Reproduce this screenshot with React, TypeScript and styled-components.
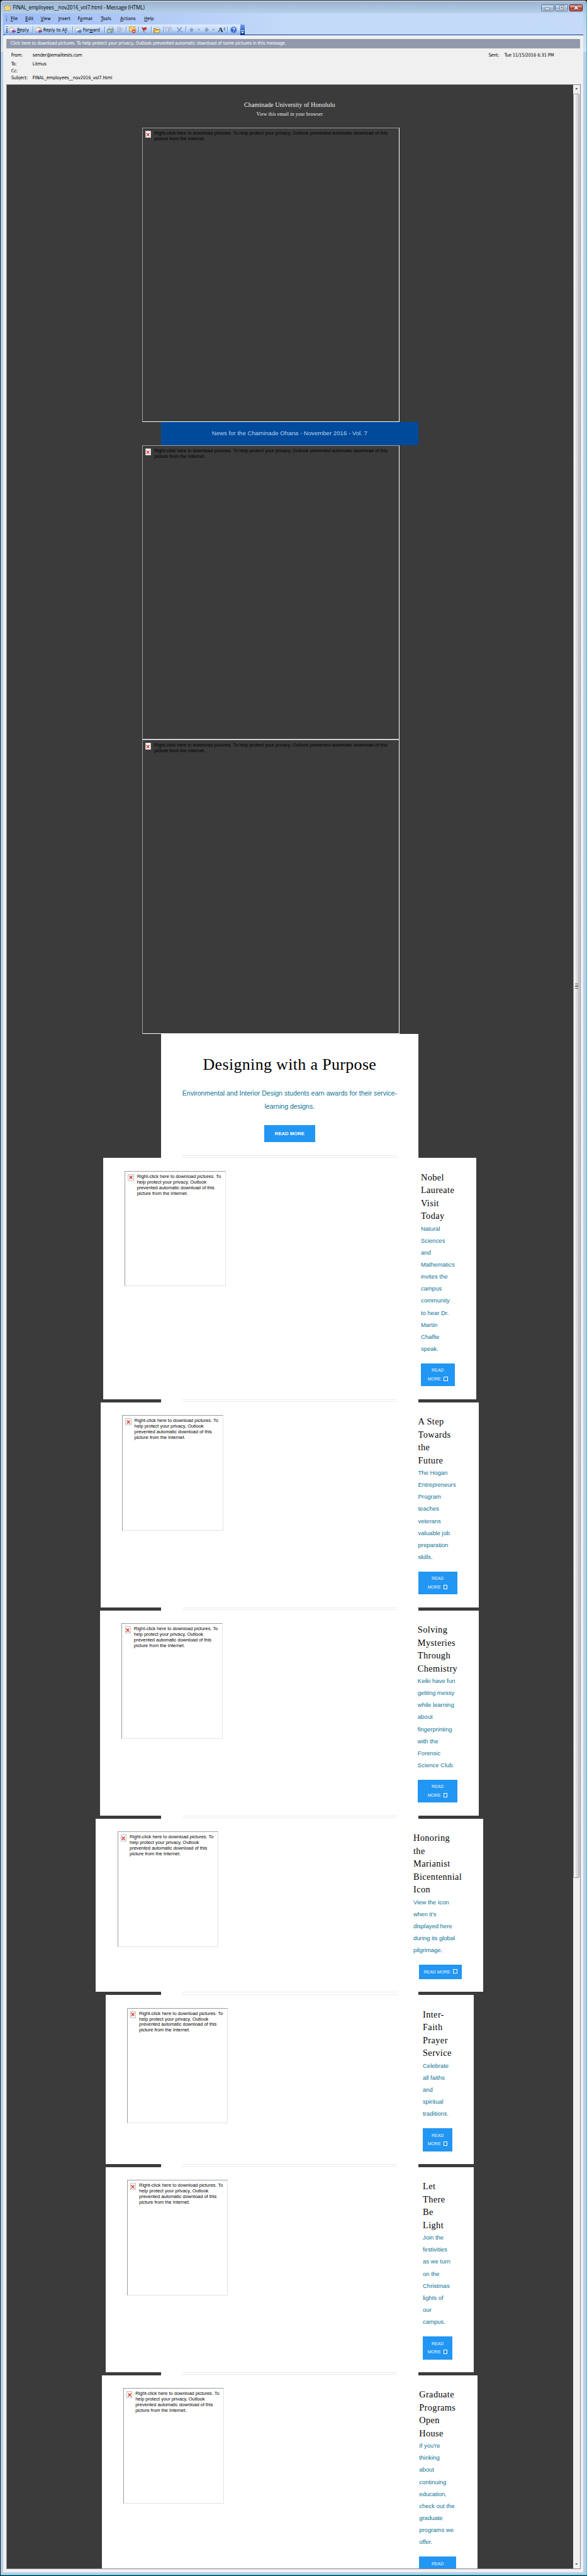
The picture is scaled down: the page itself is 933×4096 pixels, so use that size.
import React from "react";
import styled, { createGlobalStyle, css } from "styled-components";

/* 1rem equals ten layout units; every size below is written in rem. */
const GlobalStyle = createGlobalStyle`
  html { font-size: 6.8267px; }
  body { margin: 0; background: #111; overflow: hidden; }
  *, *::before, *::after { box-sizing: border-box; }
`;

const uiFont = `"DejaVu Sans Condensed", "DejaVu Sans", sans-serif`;
const bodyFont = `"Liberation Sans", Arial, sans-serif`;
const serifFont = `"Liberation Serif", Georgia, serif`;

const Window = styled.div`
  display: flex;
  flex-direction: column;
  width: 100%;
  height: 600rem;
  overflow: hidden;
  padding: 0.1rem 0 0.1rem 0.1rem;
  background: #14181c;
  font-family: ${uiFont};
  font-stretch: condensed;
  color: #000;
`;

const Frame = styled.div`
  flex: 1;
  min-height: 0;
  display: flex;
  flex-direction: column;
  padding: 0 0.7rem 0.6rem;
  border-top: 1px solid #f4f8fc;
  border-right: 1px solid #35c6dd;
  border-bottom: 1px solid #18c3dc;
  border-radius: 0.6rem 0.6rem 0 0;
  background: linear-gradient(#9ab3d1 0, #b6d0e9 2.8rem, #d3e3f5 11.7rem, #b7d0ea 11.8rem);
`;

const TitleBar = styled.div`
  flex: none;
  height: 2.8rem;
  display: flex;
  align-items: center;
  gap: 0.5rem;
  padding: 0.4rem 0.2rem 0 0.3rem;
  > svg { flex: none; width: 1.4rem; height: 1.4rem; }
`;

const Title = styled.div`
  flex: 1;
  font: 1.2rem/1.6rem "Open Sans", "Noto Sans", sans-serif;
  letter-spacing: -0.015em;
  white-space: nowrap;
`;

const Controls = styled.div`
  display: flex;
  gap: 0.2rem;
`;

const Control = styled.div<{ $close?: boolean }>`
  width: 3.1rem;
  height: 1.7rem;
  display: flex;
  align-items: center;
  justify-content: center;
  border: 1px solid ${(p) => (p.$close ? "#54101c" : "#5d7390")};
  border-radius: 0.2rem;
  background: ${(p) =>
    p.$close
      ? "linear-gradient(#e3a095 0, #d58476 48%, #b83a22 50%, #cf6a56 100%)"
      : "linear-gradient(#c4d7ea 0, #b9cfe5 48%, #98b3cf 50%, #b5cee6 100%)"};
  svg { display: block; width: 1.4rem; height: 1.2rem; }
`;

const MenuBar = styled.div`
  flex: none;
  height: 2.6rem;
  display: flex;
  align-items: center;
  padding-left: 0.6rem;
  background: linear-gradient(90deg, #9ebcf5 0, #c4daf9 50%, #c5daf9 100%);
`;

const Grip = styled.div`
  flex: none;
  width: 0.2rem;
  height: 1.4rem;
  background: repeating-linear-gradient(#27407c 0 0.2rem, transparent 0.2rem 0.4rem);
`;

const MenuItem = styled.div<{ $w: number }>`
  width: ${(p) => p.$w}rem;
  font-size: 1.1rem;
  letter-spacing: -0.005em;
  white-space: nowrap;
  u { text-underline-offset: 0.1rem; text-decoration-thickness: 1px; }
`;

const MenuItems = styled.div`
  display: flex;
  margin-left: 0.9rem;
`;

const ToolRow = styled.div`
  flex: none;
  height: 2.6rem;
  padding-left: 0.3rem;
  display: flex;
  border-bottom: 1px solid #003c8c;
  background: linear-gradient(90deg, #9ebcf5 0, #c4daf9 50%, #c5daf9 100%);
`;

const Toolbar = styled.div`
  width: 54.8rem;
  height: 2.5rem;
  display: flex;
  align-items: center;
  padding-left: 0.4rem;
  border-radius: 0.3rem 0 0 0.3rem;
  background: linear-gradient(#dfecfe 0, #c2d9f9 50%, #7da6e3 100%);
`;

const ToolbarEnd = styled.div`
  width: 1.1rem;
  height: 2.5rem;
  display: flex;
  align-items: flex-end;
  justify-content: center;
  padding-bottom: 0.3rem;
  border-radius: 0 0.3rem 0.3rem 0;
  background: linear-gradient(#75a3ee, #00318c);
  svg { width: 0.7rem; height: 0.8rem; }
`;

const Tool = styled.div<{ $w: number; $ml?: number }>`
  flex: none;
  display: flex;
  align-items: center;
  gap: 0.3rem;
  width: ${(p) => p.$w}rem;
  margin-left: ${(p) => p.$ml ?? 0}rem;
  font-size: 1.1rem;
  white-space: nowrap;
  u { text-underline-offset: 0.1rem; text-decoration-thickness: 1px; }
  svg { flex: none; display: block; width: 1.6rem; height: 1.6rem; }
`;

const Separator = styled.div<{ $ml: number; $mr: number }>`
  flex: none;
  width: 0.1rem;
  height: 1.5rem;
  margin: 0 ${(p) => p.$mr}rem 0 ${(p) => p.$ml}rem;
  background: #6a8ccb;
  box-shadow: 1px 0 0 #edf4ff;
`;

const Caret = styled.div<{ $ml: number; $mr: number }>`
  flex: none;
  width: 0.5rem;
  height: 0.35rem;
  margin: 0.1rem ${(p) => p.$mr}rem 0 ${(p) => p.$ml}rem;
  background: #7d8694;
  clip-path: polygon(0 0, 100% 0, 50% 100%);
`;

const Client = styled.div`
  flex: 1;
  min-height: 0;
  display: flex;
  flex-direction: column;
  padding: 0.9rem 0.6rem 0.7rem;
  background: #f0f0f0;
`;

const InfoBar = styled.div`
  flex: none;
  height: 2.1rem;
  margin: 0 0.1rem;
  padding-left: 0.8rem;
  border: 1px solid #9c9da4;
  background: #9199ae;
  color: #fff;
  font-size: 1.1rem;
  line-height: 1.8rem;
  letter-spacing: -0.021em;
  white-space: nowrap;
`;

const Headers = styled.div`
  flex: none;
  height: 8.35rem;
  display: grid;
  grid-template-columns: 5rem 1fr 3.7rem 17.8rem;
  grid-template-rows: 2.3rem 1.8rem 1.6rem 1.6rem;
  align-items: center;
  padding: 0.4rem 0 0 1.2rem;
  font-size: 1.1rem;
  letter-spacing: -0.018em;
  white-space: nowrap;
`;

const Pane = styled.div`
  flex: 1;
  min-height: 0;
  display: flex;
  padding-left: 0.1rem;
  border: 1px solid #828790;
  background: #fff;
`;

const Mail = styled.div`
  flex: 1;
  min-width: 0;
  display: flex;
  flex-direction: column;
  align-items: center;
  overflow: hidden;
  margin: 0.1rem 0;
  padding-right: 0.15rem;
  background: #3b3b3b;
  font-family: ${bodyFont};
`;

const ScrollBar = styled.div`
  flex: none;
  width: 1.7rem;
  display: flex;
  flex-direction: column;
  align-items: center;
  padding: 0.7rem 0;
  background: #f1f0f0;
`;

const ScrollArrow = styled.div<{ $up?: boolean }>`
  width: 0.7rem;
  height: 0.4rem;
  background: #444;
  ${(p) =>
    p.$up
      ? css`clip-path: polygon(50% 0, 100% 100%, 0 100%);`
      : css`margin: auto 0 0.2rem; clip-path: polygon(0 0, 100% 0, 50% 100%);`}
`;

const ScrollThumb = styled.div`
  width: 1.5rem;
  height: 415.6rem;
  margin-top: 1rem;
  display: flex;
  align-items: center;
  justify-content: center;
  border: 1px solid #979797;
  border-radius: 0.2rem;
  background: linear-gradient(90deg, #f5f5f5 0, #e9e9eb 48%, #d9dadc 52%, #cfcfd2 100%);
  &::before {
    content: "";
    width: 0.8rem;
    height: 1.2rem;
    background: repeating-linear-gradient(#666 0 0.2rem, transparent 0.2rem 0.5rem);
  }
`;

const Sender = styled.div`
  flex: none;
  height: 9.95rem;
  padding-top: 3.6rem;
  text-align: center;
  font-family: ${serifFont};
  color: #f0f0f0;
  white-space: nowrap;
`;

const SenderName = styled.div`
  font-size: 1.5rem;
  line-height: 2rem;
`;

const BrowserLink = styled.div`
  margin-top: 0.5rem;
  font-size: 1.15rem;
  line-height: 1.6rem;
  letter-spacing: 0.02em;
`;

const Missing = styled.div<{ $dark?: boolean }>`
  flex: none;
  display: flex;
  align-items: flex-start;
  gap: 0.7rem;
  padding: 0.6rem;
  border: 1px solid #9d9d9d;
  font-size: 1.09rem;
  line-height: 1.3rem;
  letter-spacing: 0;
  white-space: nowrap;
  ${(p) =>
    p.$dark
      ? css`
          width: 60rem;
          height: 68.55rem;
          margin-right: 8.8rem;
          border-right-color: #fff;
          border-bottom-color: #fff;
        `
      : css`
          width: 23.5rem;
          height: 26.9rem;
          border-right-color: #e3e3e3;
          border-bottom-color: #e3e3e3;
        `}
`;

const MissingIcon = styled.div`
  flex: none;
  width: 1.4rem;
  height: 1.6rem;
  border: 1px solid #c0c0c0;
  background: #fff;
  display: flex;
  align-items: center;
  justify-content: center;
  svg { width: 0.9rem; height: 0.9rem; }
`;

const Banner = styled.div`
  flex: none;
  width: 60rem;
  height: 5.4rem;
  background: #004a9c;
  color: #b8d2f0;
  font-size: 1.4rem;
  line-height: 5.4rem;
  letter-spacing: 0.004em;
  text-align: center;
`;

const Lead = styled.div`
  flex: none;
  width: 60rem;
  height: 28.2rem;
  display: flex;
  flex-direction: column;
  align-items: center;
  padding-top: 4.7rem;
  background: #fff;
`;

const LeadTitle = styled.div`
  font-family: ${serifFont};
  font-size: 3.8rem;
  line-height: 5.1rem;
  letter-spacing: 0.0136em;
  white-space: nowrap;
`;

const LeadText = styled.div`
  margin-top: 2.5rem;
  font-size: 1.55rem;
  line-height: 3rem;
  letter-spacing: -0.002em;
  color: #0e7496;
  text-align: center;
  white-space: nowrap;
`;

const LeadButton = styled.div`
  width: 11.8rem;
  height: 4rem;
  margin-top: 2.9rem;
  background: #2296f3;
  color: #fff;
  font-size: 1.13rem;
  font-weight: bold;
  line-height: 4rem;
  text-align: center;
`;

const Divider = styled.div`
  flex: none;
  width: 60rem;
  height: 0.7rem;
  padding: 0 5rem;
  background: #fff;
  &::before {
    content: "";
    display: block;
    height: 0.6rem;
    border: solid #ececec;
    border-width: 0.2rem 0;
  }
`;

const Article = styled.div<{ $w: number }>`
  flex: none;
  width: ${(p) => p.$w}rem;
  display: flex;
  justify-content: space-between;
  padding: 3rem 5rem;
  background: #fff;
`;

const Story = styled.div<{ $w: number }>`
  width: ${(p) => p.$w}rem;
  display: flex;
  flex-direction: column;
  white-space: nowrap;
`;

const StoryTitle = styled.div`
  font-family: ${serifFont};
  font-size: 2.1rem;
  line-height: 3rem;
  letter-spacing: 0.028em;
`;

const StoryText = styled.div`
  font-size: 1.4rem;
  line-height: 2.8rem;
  letter-spacing: -0.004em;
  color: #0f7495;
`;

const StoryButton = styled.div<{ $wide?: boolean }>`
  align-self: ${(p) => (p.$wide ? "flex-end" : "stretch")};
  width: ${(p) => (p.$wide ? "10rem" : "auto")};
  margin-top: 2rem;
  padding: 0.7rem 0;
  background: #2296f3;
  color: #eef7ff;
  font-size: 1.02rem;
  line-height: 2rem;
  text-align: center;
`;

const Tofu = styled.span`
  display: inline-block;
  width: 0.9rem;
  height: 1rem;
  margin-left: 0.7rem;
  border: 1px solid #fff;
  vertical-align: -0.1rem;
`;

const RedCross = () => (
  <svg viewBox="0 0 9 9">
    <path d="M1 0.8 L8 8.2 M8 0.8 L1 8.2" stroke="#df2f1c" strokeWidth="2" fill="none" />
  </svg>
);

const MissingPicture = ({ lines, dark }: { lines: string[]; dark?: boolean }) => (
  <Missing $dark={dark}>
    <MissingIcon><RedCross /></MissingIcon>
    <div>
      {lines.map((l) => <div key={l}>{l}</div>)}
    </div>
  </Missing>
);

const wideLines = [
  "Right-click here to download pictures. To help protect your privacy, Outlook prevented automatic download of this",
  "picture from the Internet.",
];
const narrowLines = [
  "Right-click here to download pictures. To",
  "help protect your privacy, Outlook",
  "prevented automatic download of this",
  "picture from the Internet.",
];

const EnvelopeIcon = () => (
  <svg viewBox="0 0 16 16">
    <rect x="0.5" y="2" width="15" height="12" fill="#fbe08a" stroke="#b98a25" />
    <path d="M1 2.5 L8 9 L15 2.5 M1 13.5 L6 7.5 M15 13.5 L10 7.5" fill="none" stroke="#c7962c" />
  </svg>
);

const MailIcon = ({ arrow, double }: { arrow: "left" | "right"; double?: boolean }) => (
  <svg viewBox="0 0 16 16">
    {double && <path d="M4 5 L9 0.8 L14.5 5 V11 H4 Z" fill="#f9dc8a" stroke="#8b93ad" strokeWidth="0.8" />}
    <path d="M0.8 6.5 L6.5 1.5 L12.5 6.5 V13 H0.8 Z" fill="#fbe7a8" stroke="#7d88a8" strokeWidth="0.9" />
    <path d="M2.5 6 H11 V9 L6.7 11 L2.5 9 Z" fill="#fff" />
    <path d="M0.8 13 L5 9.5 H8.5 L12.5 13 Z" fill="#dfe8f7" stroke="#7d88a8" strokeWidth="0.7" />
    {arrow === "left" ? (
      <path d="M7 11.5 L11 7.8 V10 H15.5 V13 H11 V15.3 Z" fill="#a23aa4" stroke="#6d1f74" strokeWidth="0.6" />
    ) : (
      <path d="M15.5 11.5 L11.5 7.8 V10 H7 V13 H11.5 V15.3 Z" fill="#3f83e0" stroke="#1d4fa0" strokeWidth="0.6" />
    )}
  </svg>
);

const PrintIcon = () => (
  <svg viewBox="0 0 16 16">
    <path d="M5 6 L7 1 H14 L12 6 Z" fill="#fff" stroke="#667" strokeWidth="0.8" />
    <path d="M1 8 L4 5.5 H15 V11 L12 14.5 H1 Z" fill="#c9ccd6" stroke="#4c5060" strokeWidth="0.9" />
    <path d="M1 8 H12 L15 5.8 M12 8 V14" stroke="#4c5060" strokeWidth="0.8" fill="none" />
    <rect x="7.5" y="10.5" width="4.5" height="3" fill="#2fd03d" />
  </svg>
);

const CopyIcon = () => (
  <svg viewBox="0 0 16 16">
    <path d="M1 1.5 H7 L9 3.5 V11 H1 Z M6.5 5 H12.5 L15 7.5 V14.5 H6.5 Z" fill="#d4dff3" stroke="#8a9cc4" />
    <path d="M2.5 5 H6 M2.5 7.5 H6 M8.5 9 H13 M8.5 11.5 H13" stroke="#8a9cc4" />
  </svg>
);

const BlockIcon = () => (
  <svg viewBox="0 0 16 16">
    <rect x="0.6" y="1" width="14" height="10" fill="#fbdc7c" stroke="#b98a25" />
    <path d="M1 1.5 L7.6 7 L14 1.5" fill="none" stroke="#c7962c" />
    <circle cx="11.3" cy="11.3" r="4.2" fill="#dc3c22" />
    <rect x="8.8" y="10.4" width="5" height="1.8" fill="#fff" />
  </svg>
);

const FlagIcon = () => (
  <svg viewBox="0 0 16 16">
    <path d="M2.5 2 L8 14.5" stroke="#555" strokeWidth="1.3" />
    <path d="M2.5 2.5 Q6 4.5 8 3 Q10.5 1.5 13.5 3.5 Q12 6 11.5 8.5 Q9 7.5 6 9.5 Z" fill="#d8321f" stroke="#8e1c10" strokeWidth="0.6" />
  </svg>
);

const FolderIcon = () => (
  <svg viewBox="0 0 16 16">
    <path d="M5 6 L10 1 L14 5 L12 9 Z" fill="#fff" stroke="#667aa5" strokeWidth="0.9" />
    <path d="M1 4.5 H5 L6.5 6.5 H13 V14.5 H1 Z" fill="#e9b640" stroke="#97691a" strokeWidth="0.9" />
    <path d="M1 14.5 L4 8.5 H15.5 L13 14.5 Z" fill="#fcdb78" stroke="#97691a" strokeWidth="0.9" />
  </svg>
);

const MoveIcon = () => (
  <svg viewBox="0 0 16 16">
    <path d="M1 2 H8 V13 H1 Z M6.5 7 H14.5 V15 H6.5 Z" fill="#cddaf1" stroke="#8da0c8" />
    <path d="M9 1.5 H12.5 V5.5 M10.5 3.8 L12.5 5.8 L14.5 3.8 M8.5 10 H12.5 M8.5 12.5 H12.5" fill="none" stroke="#8da0c8" />
  </svg>
);

const DeleteIcon = () => (
  <svg viewBox="0 0 16 16">
    <path d="M2 2.5 L13.5 14 M13 2 Q7 7 3 14" fill="none" stroke="#7f8fb8" strokeWidth="2" />
  </svg>
);

const ArrowIcon = ({ down }: { down?: boolean }) => (
  <svg viewBox="0 0 16 16">
    <path
      d={down ? "M5.5 3 H10.5 V7.5 H14 L8 13.5 L2 7.5 H5.5 Z" : "M8 3 L14 9 H10.5 V12.5 H5.5 V9 H2 Z"}
      fill="#8f9ebf"
    />
  </svg>
);

const FontGlyph = styled.span`
  font: bold 1.65rem/1.6rem ${serifFont};
  color: #25303c;
`;

const FontArrows = () => (
  <svg viewBox="0 0 6 12">
    <path d="M3 0 L5.5 3.5 H0.5 Z M3 9 L5.5 5.5 H0.5 Z" fill="#24509f" />
  </svg>
);

const FontTool = styled(Tool)`
  gap: 0;
  svg { width: 0.5rem; height: 1.4rem; }
`;

const HelpIcon = () => (
  <svg viewBox="0 0 16 16">
    <circle cx="8" cy="8" r="7.2" fill="#2d66cf" stroke="#e9f1ff" />
    <circle cx="8" cy="8" r="7.6" fill="none" stroke="#3a62ad" strokeWidth="0.6" />
    <path d="M5.6 6.2 Q5.7 3.8 8.1 3.8 Q10.4 3.9 10.4 6 Q10.3 7.3 8.9 8 Q8.1 8.5 8.1 9.6 M8.1 11 V12.7" fill="none" stroke="#fff" strokeWidth="1.6" />
  </svg>
);

type StoryData = { w: number; col: number; title: string[]; text: string[]; wide?: boolean };

const stories: StoryData[] = [
  {
    w: 86.8, col: 7.85,
    title: ["Nobel", "Laureate", "Visit", "Today"],
    text: ["Natural", "Sciences", "and", "Mathematics", "invites the", "campus", "community", "to hear Dr.", "Martin", "Chalfie", "speak."],
  },
  {
    w: 88, col: 9.1,
    title: ["A Step", "Towards", "the", "Future"],
    text: ["The Hogan", "Entrepreneurs", "Program", "teaches", "veterans", "valuable job", "preparation", "skills."],
  },
  {
    w: 88.2, col: 9.3,
    title: ["Solving", "Mysteries", "Through", "Chemistry"],
    text: ["Keiki have fun", "getting messy", "while learning", "about", "fingerprinting", "with the", "Forensic", "Science Club."],
  },
  {
    w: 90.2, col: 11.3, wide: true,
    title: ["Honoring", "the", "Marianist", "Bicentennial", "Icon"],
    text: ["View the Icon", "when it's", "displayed here", "during its global", "pilgrimage."],
  },
  {
    w: 85.8, col: 6.9,
    title: ["Inter-", "Faith", "Prayer", "Service"],
    text: ["Celebrate", "all faiths", "and", "spiritual", "traditions."],
  },
  {
    w: 85.8, col: 6.9,
    title: ["Let", "There", "Be", "Light"],
    text: ["Join the", "festivities", "as we turn", "on the", "Christmas", "lights of", "our", "campus."],
  },
  {
    w: 87.5, col: 8.6,
    title: ["Graduate", "Programs", "Open", "House"],
    text: ["If you're", "thinking", "about", "continuing", "education,", "check out the", "graduate", "programs we", "offer."],
  },
];

const menu: [string, string, string, number][] = [
  ["", "F", "ile", 3.4],
  ["", "E", "dit", 3.6],
  ["", "V", "iew", 4.1],
  ["", "I", "nsert", 4.5],
  ["F", "o", "rmat", 5.4],
  ["", "T", "ools", 4.5],
  ["", "A", "ctions", 5.6],
  ["", "H", "elp", 3],
];

export default function App() {
  return (
    <>
      <GlobalStyle />
      <Window>
        <Frame>
          <TitleBar>
            <EnvelopeIcon />
            <Title>FINAL_employees__nov2016_vol7.html - Message (HTML)</Title>
            <Controls>
              <Control>
                <svg viewBox="0 0 14 12"><rect x="2" y="7" width="10" height="4" fill="#fff" stroke="#4a5568" /></svg>
              </Control>
              <Control>
                <svg viewBox="0 0 14 12">
                  <rect x="2.5" y="1.5" width="9" height="9" fill="#fff" stroke="#4a5568" />
                  <rect x="5.5" y="4.5" width="3" height="3" fill="#9ab3d1" stroke="#4a5568" />
                </svg>
              </Control>
              <Control $close>
                <svg viewBox="0 0 14 12">
                  <path d="M3 2 L11 10 M11 2 L3 10" stroke="#4a4a60" strokeWidth="4.2" />
                  <path d="M3.3 2.3 L10.7 9.7 M10.7 2.3 L3.3 9.7" stroke="#fff" strokeWidth="2.4" />
                </svg>
              </Control>
            </Controls>
          </TitleBar>
          <MenuBar>
            <Grip />
            <MenuItems>
              {menu.map(([a, b, c, w]) => (
                <MenuItem key={b + c} $w={w}>{a}<u>{b}</u>{c}</MenuItem>
              ))}
            </MenuItems>
          </MenuBar>
          <ToolRow>
            <Toolbar>
              <Grip />
              <Tool $w={5.1} $ml={0.4}><MailIcon arrow="left" /><span><u>R</u>eply</span></Tool>
              <Separator $ml={0.4} $mr={0.5} />
              <Tool $w={8.1}><MailIcon arrow="left" double /><span>Reply to A<u>l</u>l</span></Tool>
              <Separator $ml={0.5} $mr={0.5} />
              <Tool $w={6.4}><MailIcon arrow="right" /><span>For<u>w</u>ard</span></Tool>
              <Separator $ml={0.5} $mr={0.5} />
              <Tool $w={1.6}><PrintIcon /></Tool>
              <Tool $w={1.6} $ml={0.7}><CopyIcon /></Tool>
              <Separator $ml={0.5} $mr={0.6} />
              <Tool $w={1.6}><BlockIcon /></Tool>
              <Separator $ml={0.7} $mr={0.5} />
              <Tool $w={1.6}><FlagIcon /></Tool>
              <Separator $ml={0.7} $mr={0.5} />
              <Tool $w={1.6}><FolderIcon /></Tool>
              <Separator $ml={0.7} $mr={0.4} />
              <Tool $w={1.6}><MoveIcon /></Tool>
              <Tool $w={1.6} $ml={0.8}><DeleteIcon /></Tool>
              <Separator $ml={0.7} $mr={0.5} />
              <Tool $w={1.6}><ArrowIcon /></Tool>
              <Caret $ml={0.6} $mr={0.7} />
              <Tool $w={1.6}><ArrowIcon down /></Tool>
              <Caret $ml={0.6} $mr={0.8} />
              <FontTool $w={1.6}><FontGlyph>A</FontGlyph><FontArrows /></FontTool>
              <Separator $ml={0.6} $mr={0.5} />
              <Tool $w={1.6}><HelpIcon /></Tool>
            </Toolbar>
            <ToolbarEnd>
              <svg viewBox="0 0 7 8"><path d="M0 0 H7 V1.4 H0 Z M0 3.5 H7 L3.5 8 Z" fill="#fff" /></svg>
            </ToolbarEnd>
          </ToolRow>
          <Client>
            <InfoBar>
              Click here to download pictures. To help protect your privacy, Outlook prevented automatic download of some pictures in this message.
            </InfoBar>
            <Headers>
              <span>From:</span><span>sender@emailtests.com</span><span>Sent:</span><span>Tue 11/15/2016 6:31 PM</span>
              <span>To:</span><span>Litmus</span><span /><span />
              <span>Cc:</span><span /><span /><span />
              <span>Subject:</span><span>FINAL_employees__nov2016_vol7.html</span><span /><span />
            </Headers>
            <Pane>
              <Mail>
                <Sender>
                  <SenderName>Chaminade University of Honolulu</SenderName>
                  <BrowserLink>View this email in your browser</BrowserLink>
                </Sender>
                <MissingPicture dark lines={wideLines} />
                <Banner>News for the Chaminade Ohana - November 2016 - Vol. 7</Banner>
                <MissingPicture dark lines={wideLines} />
                <MissingPicture dark lines={wideLines} />
                <Lead>
                  <LeadTitle>Designing with a Purpose</LeadTitle>
                  <LeadText>
                    Environmental and Interior Design students earn awards for their service-
                    <br />
                    learning designs.
                  </LeadText>
                  <LeadButton>READ MORE</LeadButton>
                </Lead>
                {stories.map((s) => (
                  <React.Fragment key={s.title.join(" ")}>
                    <Divider />
                    <Article $w={s.w}>
                      <MissingPicture lines={narrowLines} />
                      <Story $w={s.col}>
                        <StoryTitle>{s.title.map((t) => <div key={t}>{t}</div>)}</StoryTitle>
                        <StoryText>{s.text.map((t) => <div key={t}>{t}</div>)}</StoryText>
                        <StoryButton $wide={s.wide}>
                          READ{s.wide ? " " : <br />}MORE<Tofu />
                        </StoryButton>
                      </Story>
                    </Article>
                  </React.Fragment>
                ))}
              </Mail>
              <ScrollBar>
                <ScrollArrow $up />
                <ScrollThumb />
                <ScrollArrow />
              </ScrollBar>
            </Pane>
          </Client>
        </Frame>
      </Window>
    </>
  );
}
